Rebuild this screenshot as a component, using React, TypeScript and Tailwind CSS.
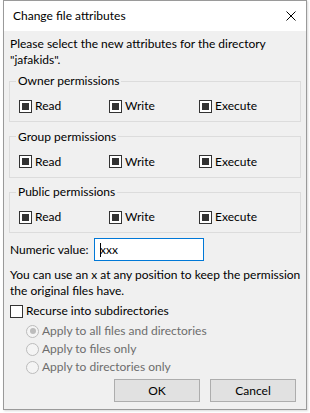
import React from "react";

const FONT = { fontFamily: 'Lato, "Noto Sans", sans-serif' };

function Check({ mixed }: { mixed?: boolean }) {
  return (
    <span className="w-[13px] h-[13px] border border-[#333333] bg-white flex items-center justify-center shrink-0">
      {mixed && <span className="w-[7px] h-[7px] bg-[#333333]" />}
    </span>
  );
}

function Radio({ on }: { on?: boolean }) {
  return (
    <span className="w-[13px] h-[13px] rounded-full border border-[#bcbcbc] bg-[#f4f4f4] flex items-center justify-center shrink-0">
      {on && <span className="w-[6px] h-[6px] rounded-full bg-[#bcbcbc]" />}
    </span>
  );
}

function Group({ title }: { title: string }) {
  return (
    <fieldset className="mx-[5px] border border-[#dcdcdc] pl-[6px] pt-[9px] pb-[7px]">
      <legend className="px-[2px] leading-[16px]">{title}</legend>
      <div className="ml-[3px] grid grid-cols-[90px_90px_90px] leading-[16px]">
        {["Read", "Write", "Execute"].map((l) => (
          <div key={l} className="flex items-center gap-[3px]">
            <Check mixed />
            <span>{l}</span>
          </div>
        ))}
      </div>
    </fieldset>
  );
}

export default function App() {
  return (
    <div className="w-[310px] h-[413px] bg-white overflow-hidden text-[12px] text-black" style={FONT}>
      <div className="ml-[3px] w-[304px] h-[410px] border border-[#9a9a9a] bg-[#f0f0f0] flex flex-col shadow-[1px_1px_2px_rgba(0,0,0,0.15)]">
        <div className="h-[30px] bg-white flex items-center justify-between pl-[9px] pr-[9px] shrink-0">
          <span>Change file attributes</span>
          <svg width="10" height="10" viewBox="0 0 10 10" className="mr-[1px]">
            <path d="M0.5 0.5 L9.5 9.5 M9.5 0.5 L0.5 9.5" stroke="#000" strokeWidth="1" fill="none" />
          </svg>
        </div>
        <div className="flex flex-col">
          <p className="mt-[5px] pl-[6px] leading-[16px] whitespace-nowrap">
            Please select the new attributes for the directory
            <br />
            "jafakids".
          </p>
          <div className="mt-[5px] flex flex-col gap-[6.5px]">
            <Group title="Owner permissions" />
            <Group title="Group permissions" />
            <Group title="Public permissions" />
          </div>
          <div className="mt-[5px] pl-[6px] flex items-center h-[23px]">
            <span className="w-[84px] leading-[16px] whitespace-nowrap">Numeric value:</span>
            <div className="w-[110px] h-[23px] border border-[#0078d7] bg-white flex items-center pl-[5px]">
              <span className="w-px h-[14px] bg-black" />
              <span className="-ml-[1px]">xxx</span>
            </div>
          </div>
          <p className="mt-[6px] pl-[6px] leading-[16px] whitespace-nowrap">
            You can use an x at any position to keep the permission
            <br />
            the original files have.
          </p>
          <div className="mt-[4px] pl-[6px] flex items-center gap-[3px] leading-[16px]">
            <Check />
            <span>Recurse into subdirectories</span>
          </div>
          <div className="mt-[3px] pl-[22px] flex flex-col text-[#6d6d6d] leading-[16px]">
            {[
              ["Apply to all files and directories", true],
              ["Apply to files only", false],
              ["Apply to directories only", false],
            ].map(([l, on]) => (
              <div key={l as string} className="h-[18px] flex items-center gap-[3px]">
                <Radio on={on as boolean} />
                <span>{l as string}</span>
              </div>
            ))}
          </div>
          <div className="mt-[3px] flex justify-end gap-[10px] pr-[10px]">
            <div className="w-[86px] h-[23px] border border-[#adadad] bg-[#e1e1e1] flex items-center justify-center">OK</div>
            <div className="w-[86px] h-[23px] border border-[#adadad] bg-[#e1e1e1] flex items-center justify-center">Cancel</div>
          </div>
        </div>
      </div>
    </div>
  );
}
